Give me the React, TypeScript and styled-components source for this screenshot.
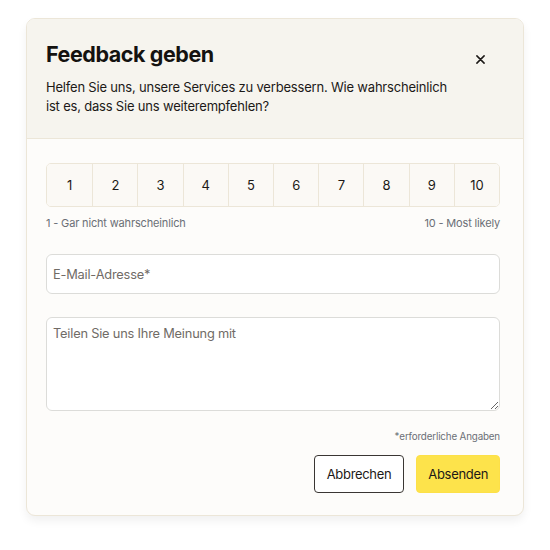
import React, { useState } from 'react';
import styled, { createGlobalStyle } from 'styled-components';

const GlobalStyle = createGlobalStyle`
  * { box-sizing: border-box; }
  body {
    margin: 0;
    background: #ffffff;
    font-family: Inter, 'Noto Sans', sans-serif;
    letter-spacing: -0.01em;
    color: #1c1917;
  }
`;

const Page = styled.div`
  padding: 18px 26px;
`;

const Card = styled.div`
  width: 498px;
  border: 1px solid #ece6d8;
  border-radius: 9px;
  background: #fdfcfa;
  overflow: hidden;
  box-shadow: 0 5px 10px rgba(0, 0, 0, 0.06);
`;

const Header = styled.div`
  display: flex;
  justify-content: space-between;
  align-items: flex-start;
  background: #f6f4ee;
  border-bottom: 1px solid #ece6d8;
  padding: 21px 20px 0 19px;
  height: 120px;
`;

const Title = styled.h2`
  margin: 0 0 10px;
  font-size: 21.5px;
  font-weight: 700;
  letter-spacing: -0.02em;
  line-height: 28px;
  color: #141210;
`;

const Subtitle = styled.p`
  margin: 0;
  width: 408px;
  font-size: 13px;
  letter-spacing: -0.015em;
  line-height: 18.5px;
  color: #1c1917;
`;

const Close = styled.button`
  border: none;
  background: none;
  padding: 0;
  margin: 13px 17px 0 0;
  width: 12px;
  height: 12px;
  display: flex;
  align-items: center;
  justify-content: center;
  cursor: pointer;
  color: #1c1917;
`;

const Body = styled.div`
  padding: 24px 23px 22px 19px;
  display: flex;
  flex-direction: column;
`;

const Scale = styled.div`
  display: grid;
  grid-template-columns: repeat(10, 1fr);
  border: 1px solid #ece6d8;
  border-radius: 5px;
  overflow: hidden;
  height: 44px;
`;

const ScaleButton = styled.button<{ $active: boolean }>`
  border: none;
  border-left: 1px solid #ece6d8;
  background: ${(p) => (p.$active ? '#fde047' : '#fbf9f5')};
  font-family: inherit;
  letter-spacing: inherit;
  font-size: 13px;
  color: #1c1917;
  cursor: pointer;
  &:first-child { border-left: none; }
`;

const ScaleLabels = styled.div`
  display: flex;
  justify-content: space-between;
  margin-top: 9px;
  font-size: 11px;
  color: #6b6f76;
`;

const fieldStyle = `
  width: 100%;
  border: 1px solid #dcdcd9;
  border-radius: 6px;
  background: #ffffff;
  font-family: Inter, 'Noto Sans', sans-serif;
  letter-spacing: -0.015em;
  font-size: 12.8px;
  color: #1c1917;
  padding: 0 6px;
  outline: none;
  &::placeholder { color: #706b66; }
`;

const Input = styled.input`
  ${fieldStyle}
  height: 40px;
  margin-top: 24px;
`;

const TextArea = styled.textarea`
  ${fieldStyle}
  height: 94px;
  margin-top: 23px;
  padding-top: 8px;
  resize: vertical;
  display: block;
`;

const Required = styled.div`
  text-align: right;
  font-size: 9.8px;
  color: #6b6f76;
  margin-top: 20px;
`;

const Actions = styled.div`
  display: flex;
  justify-content: flex-end;
  gap: 12px;
  margin-top: 13px;
`;

const Button = styled.button<{ $primary?: boolean }>`
  height: 38px;
  padding: 0 ${(p) => (p.$primary ? '11px' : '12px')};
  border-radius: 4px;
  font-family: inherit;
  letter-spacing: -0.025em;
  font-size: 13px;
  color: #1c1917;
  cursor: pointer;
  border: 1px solid ${(p) => (p.$primary ? '#fde047' : '#3a3633')};
  background: ${(p) => (p.$primary ? '#fde34b' : '#ffffff')};
`;

export default function App() {
  const [score, setScore] = useState<number | null>(null);

  return (
    <Page>
      <GlobalStyle />
      <Card>
        <Header>
          <div>
            <Title>Feedback geben</Title>
            <Subtitle>
              Helfen Sie uns, unsere Services zu verbessern. Wie wahrscheinlich
              ist es, dass Sie uns weiterempfehlen?
            </Subtitle>
          </div>
          <Close aria-label='Schließen'>
            <svg width='9' height='9' viewBox='0 0 10 10'>
              <path d='M1 1L9 9M9 1L1 9' stroke='currentColor' strokeWidth='1.7' strokeLinecap='round' />
            </svg>
          </Close>
        </Header>
        <Body>
          <Scale>
            {Array.from({ length: 10 }, (_, i) => i + 1).map((n) => (
              <ScaleButton key={n} $active={score === n} onClick={() => setScore(n)}>
                {n}
              </ScaleButton>
            ))}
          </Scale>
          <ScaleLabels>
            <span>1 - Gar nicht wahrscheinlich</span>
            <span>10 - Most likely</span>
          </ScaleLabels>
          <Input placeholder='E-Mail-Adresse*' />
          <TextArea placeholder='Teilen Sie uns Ihre Meinung mit' />
          <Required>*erforderliche Angaben</Required>
          <Actions>
            <Button>Abbrechen</Button>
            <Button $primary>Absenden</Button>
          </Actions>
        </Body>
      </Card>
    </Page>
  );
}
